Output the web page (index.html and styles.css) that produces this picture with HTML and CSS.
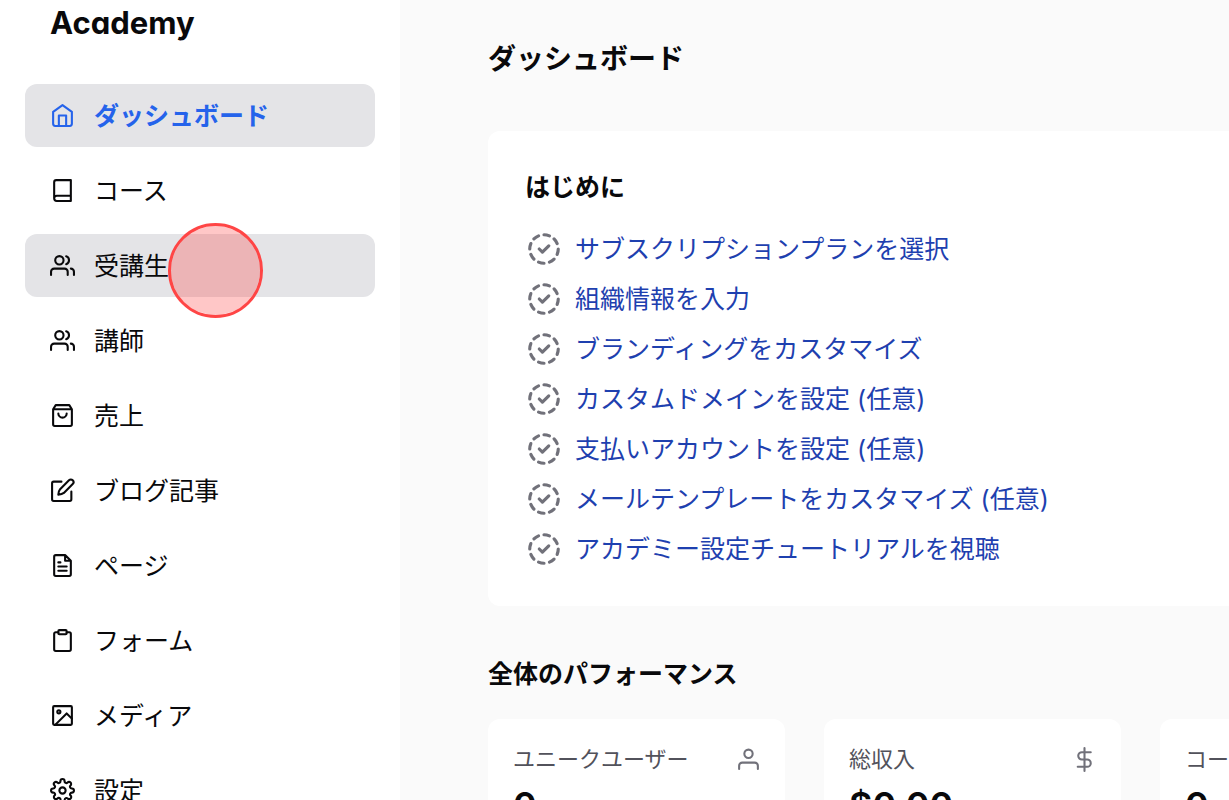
FILE: index.html
```html
<!DOCTYPE html>
<html lang="ja">
<head>
<meta charset="utf-8">
<meta name="viewport" content="width=device-width, initial-scale=1">
<title>ダッシュボード</title>
<link rel="stylesheet" href="styles.css">
</head>
<body>
<svg class="sprite" aria-hidden="true">
  <symbol id="users" viewBox="0 0 24 24"><path d="M17 21v-3a3 3 0 0 0-3-3H4a3 3 0 0 0-3 3v3M23 21v-3a3 3 0 0 0-3-3M15.5 3.2a4 4 0 0 1 0 7.6"/><circle cx="9" cy="7" r="4"/></symbol>
  <symbol id="check" viewBox="0 0 24 24"><path d="M8.56 3.69a9 9 0 0 0-2.92 1.95M3.69 8.56A9 9 0 0 0 3 12M3.69 15.44a9 9 0 0 0 1.95 2.92M8.56 20.31A9 9 0 0 0 12 21M15.44 20.31a9 9 0 0 0 2.92-1.95M20.31 15.44A9 9 0 0 0 21 12M20.31 8.56a9 9 0 0 0-1.95-2.92M15.44 3.69A9 9 0 0 0 12 3M9 12l2 2 4-4"/></symbol>
</svg>
<div class="app">
  <aside class="sidebar">
    <div class="brand">Academy</div>
    <nav class="nav">
      <a class="nav-item active" href="#"><svg class="icon" viewBox="0 0 24 24"><path d="M3 8.500 12 2l9 6.500V20a2 2 0 0 1-2 2H5a2 2 0 0 1-2-2zM8.500 22V12h7v10"/></svg>ダッシュボード</a>
      <a class="nav-item" href="#"><svg class="icon" viewBox="0 0 24 24"><path d="M4 19.500V4a2 2 0 0 1 2-2h14v20H6.500a2.500 2.500 0 0 1 0-5H20"/></svg>コース</a>
      <a class="nav-item hovered" href="#"><svg class="icon"><use href="#users"/></svg>受講生<span class="pointer"></span></a>
      <a class="nav-item" href="#"><svg class="icon"><use href="#users"/></svg>講師</a>
      <a class="nav-item" href="#"><svg class="icon" viewBox="0 0 24 24"><path d="M5.500 2h13L21 6v14.500a1.500 1.500 0 0 1-1.500 1.500h-15A1.500 1.500 0 0 1 3 20.500V6zM3 6h18M16 10a4 4 0 0 1-8 0"/></svg>売上</a>
      <a class="nav-item" href="#"><svg class="icon" viewBox="0 0 24 24"><path d="M11 3.500H3.500A1.500 1.500 0 0 0 2 5v15.500A1.500 1.500 0 0 0 3.500 22h15.500a1.500 1.500 0 0 0 1.500-1.500V13M18.200 2.200a2.500 2.500 0 0 1 3.600 3.600l-8.500 8.500c-1.500 1.200-3 1.500-5.300 1.700.1-2.300.5-3.800 1.700-5.300z"/></svg>ブログ記事</a>
      <a class="nav-item" href="#"><svg class="icon" viewBox="0 0 24 24"><path d="M14.500 2h-9A1.500 1.500 0 0 0 4 3.500v17A1.500 1.500 0 0 0 5.500 22h13a1.500 1.500 0 0 0 1.500-1.500V7.500zM14.500 2v5.500H20M16 13H8M16 17H8M10 9H8"/></svg>ページ</a>
      <a class="nav-item" href="#"><svg class="icon" viewBox="0 0 24 24"><path d="M16 4h2.500A1.500 1.500 0 0 1 20 5.500v15a1.500 1.500 0 0 1-1.500 1.500h-13A1.500 1.500 0 0 1 4 20.500v-15A1.500 1.500 0 0 1 5.500 4H8"/><rect x="8" y="2" width="8" height="4" rx="1"/></svg>フォーム</a>
      <a class="nav-item" href="#"><svg class="icon" viewBox="0 0 24 24"><rect x="3" y="3" width="18" height="18" rx="1"/><circle cx="8.500" cy="8.500" r="1.500"/><path d="M21 15l-5-5L5 21"/></svg>メディア</a>
      <a class="nav-item" href="#"><svg class="icon" viewBox="0 0 24 24"><circle cx="12" cy="12" r="3"/><path d="M19.400 15a1.650 1.650 0 0 0 .33 1.820l.06.06a2 2 0 1 1-2.830 2.830l-.06-.06a1.650 1.650 0 0 0-2.800 1.170V21a2 2 0 0 1-4 0v-.09a1.650 1.650 0 0 0-2.900-1.260l-.06.06a2 2 0 1 1-2.830-2.830l.06-.06A1.650 1.650 0 0 0 3.090 14H3a2 2 0 0 1 0-4h.09a1.650 1.650 0 0 0 1.260-2.820l-.06-.06a2 2 0 1 1 2.830-2.830l.06.06A1.650 1.650 0 0 0 10 3.090V3a2 2 0 0 1 4 0v.09a1.650 1.650 0 0 0 2.820 1.260l.06-.06a2 2 0 1 1 2.830 2.830l-.06.06A1.650 1.650 0 0 0 20.910 10H21a2 2 0 0 1 0 4h-.09a1.650 1.650 0 0 0-1.510 1z"/></svg>設定</a>
    </nav>
  </aside>
  <main class="main">
    <h1 class="page-title">ダッシュボード</h1>
    <section class="start">
      <h2 class="heading">はじめに</h2>
      <ul class="steps">
        <li><a class="step" href="#"><svg class="check"><use href="#check"/></svg>サブスクリプションプランを選択</a></li>
        <li><a class="step" href="#"><svg class="check"><use href="#check"/></svg>組織情報を入力</a></li>
        <li><a class="step" href="#"><svg class="check"><use href="#check"/></svg>ブランディングをカスタマイズ</a></li>
        <li><a class="step" href="#"><svg class="check"><use href="#check"/></svg>カスタムドメインを設定 (任意)</a></li>
        <li><a class="step" href="#"><svg class="check"><use href="#check"/></svg>支払いアカウントを設定 (任意)</a></li>
        <li><a class="step" href="#"><svg class="check"><use href="#check"/></svg>メールテンプレートをカスタマイズ (任意)</a></li>
        <li><a class="step" href="#"><svg class="check"><use href="#check"/></svg>アカデミー設定チュートリアルを視聴</a></li>
      </ul>
    </section>
    <h2 class="heading">全体のパフォーマンス</h2>
    <div class="stats">
      <article class="stat">
        <h3 class="stat-title">ユニークユーザー<svg class="icon" viewBox="0 0 24 24"><circle cx="12" cy="6.500" r="4"/><path d="M21 21v-3a3 3 0 0 0-3-3H6a3 3 0 0 0-3 3v3"/></svg></h3>
        <p class="value">0</p>
      </article>
      <article class="stat">
        <h3 class="stat-title">総収入<svg class="icon" viewBox="0 0 24 24"><path d="M12 1v22M18 5H9.500a3.500 3.500 0 0 0 0 7h5a3.500 3.500 0 0 1 0 7H5.500"/></svg></h3>
        <p class="value">$0.00</p>
      </article>
      <article class="stat">
        <h3 class="stat-title">コース</h3>
        <p class="value">0</p>
      </article>
    </div>
  </main>
</div>
</body>
</html>
```
FILE: styles.css
```css
* {
  box-sizing: border-box;
}

body {
  margin: 0;
  font: 25px/38px Inter, "Noto Sans CJK JP", sans-serif;
  font-feature-settings: "cv11";
  color: #09090b;
  background: #fafafa;
}

h1, h2, h3, p, ul {
  margin: 0;
  padding: 0;
}

ul {
  list-style: none;
}

a {
  color: inherit;
  text-decoration: none;
}

svg {
  flex: none;
  fill: none;
  stroke: currentColor;
  stroke-width: 2;
  stroke-linecap: round;
  stroke-linejoin: round;
}

.sprite {
  position: absolute;
  width: 0;
  height: 0;
}

.icon {
  width: 25px;
  height: 25px;
}

.app {
  display: flex;
  height: 100vh;
  overflow: hidden;
}

.sidebar {
  flex: none;
  width: 400px;
  padding: 3px 25px 0;
  background: #fff;
}

.brand {
  padding-left: 25px;
  margin-bottom: 41px;
  font-size: 31px;
  line-height: 40px;
  font-weight: 700;
}

.nav {
  display: grid;
  gap: 12px;
}

.nav-item {
  position: relative;
  display: flex;
  align-items: center;
  gap: 19px;
  height: 63px;
  padding: 0 25px;
  border-radius: 12px;
}

.active,
.hovered {
  background: #e4e4e7;
}

.active {
  color: #2563eb;
  font-weight: 700;
}

.pointer {
  position: absolute;
  left: 143px;
  top: -11px;
  width: 95px;
  height: 95px;
  border: 3px solid #ff4545;
  border-radius: 50%;
  background: rgba(255, 68, 68, 0.3);
  background-clip: padding-box;
}

.main {
  flex: 1;
  min-width: 0;
  padding: 40px 0 0 88px;
}

.page-title {
  margin-bottom: 53px;
  font-size: 28px;
  line-height: 38px;
  font-weight: 700;
}

.heading {
  font-size: 25px;
  line-height: 36px;
  font-weight: 700;
}

.start {
  margin-bottom: 50px;
  padding: 38px 37px;
  border-radius: 12px 0 0 12px;
  background: #fff;
}

.steps {
  display: grid;
  gap: 12px;
  margin-top: 25px;
}

.step {
  display: flex;
  align-items: center;
  gap: 12px;
  color: #1e40af;
  white-space: nowrap;
}

.check {
  width: 38px;
  height: 38px;
  color: #71717a;
}

.stats {
  display: grid;
  grid-template-columns: repeat(3, 297px);
  gap: 39px;
  margin-top: 27px;
}

.stat {
  padding: 25px 24px 25px 25px;
  border-radius: 12px;
  background: #fff;
}

.stat-title {
  display: flex;
  align-items: center;
  justify-content: space-between;
  font-size: 22px;
  line-height: 31px;
  font-weight: 400;
  color: #52525b;
}

.stat-title .icon {
  color: #71717a;
}

.value {
  margin-top: 5px;
  font-size: 36px;
  line-height: 50px;
  font-weight: 600;
}
```
